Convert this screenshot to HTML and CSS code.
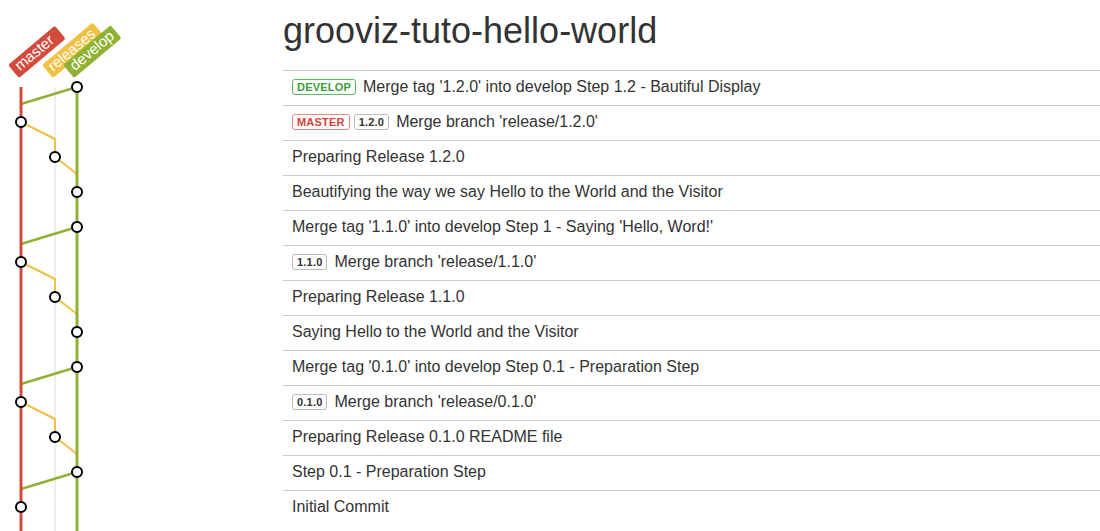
FILE: index.html
```html
<!DOCTYPE html>
<html>
<head>
<meta charset="utf-8">
<link rel="stylesheet" href="styles.css">
</head>
<body>
<div class="page">
  <div class="graph">
    <svg width="283" height="531" viewBox="0 0 283 531" xmlns="http://www.w3.org/2000/svg">
      <g class="labels" font-family="Liberation Sans, Arial, sans-serif" font-size="15" fill="#fff">
        <g transform="translate(19 78) rotate(-40)">
          <rect x="0" y="-17" width="61" height="17" rx="2" fill="#d24b3c"/>
          <text x="5" y="-4.5">master</text>
        </g>
        <g transform="translate(53 78) rotate(-40)">
          <rect x="0" y="-17" width="66" height="17" rx="2" fill="#f1c143"/>
          <text x="4" y="-4.5">releases</text>
        </g>
        <g transform="translate(74 78) rotate(-40)">
          <rect x="0" y="-17" width="62" height="17" rx="2" fill="#8fb234"/>
          <text x="5" y="-4.5">develop</text>
        </g>
      </g>
      <line x1="55" y1="87" x2="55" y2="531" stroke="#dddddd" stroke-width="1"/>
      <g fill="none" stroke-linejoin="round">
        <polyline points="77,87 21,104" stroke="#8fb234" stroke-width="2.5"/>
        <polyline points="77,227 21,244" stroke="#8fb234" stroke-width="2.5"/>
        <polyline points="77,367 21,384" stroke="#8fb234" stroke-width="2.5"/>
        <polyline points="77,472 21,489" stroke="#8fb234" stroke-width="2.5"/>
        <polyline points="21,122 55,139 55,157 77,174" stroke="#f1c143" stroke-width="2"/>
        <polyline points="21,262 55,279 55,297 77,314" stroke="#f1c143" stroke-width="2"/>
        <polyline points="21,402 55,419 55,437 77,454" stroke="#f1c143" stroke-width="2"/>
      </g>
      <line x1="21" y1="87" x2="21" y2="531" stroke="#d24b3c" stroke-width="3"/>
      <line x1="77" y1="87" x2="77" y2="531" stroke="#8fb234" stroke-width="3"/>
      <g fill="#fff" stroke="#000" stroke-width="2">
        <circle cx="77" cy="87" r="5"/>
        <circle cx="21" cy="122" r="5"/>
        <circle cx="55" cy="157" r="5"/>
        <circle cx="77" cy="192" r="5"/>
        <circle cx="77" cy="227" r="5"/>
        <circle cx="21" cy="262" r="5"/>
        <circle cx="55" cy="297" r="5"/>
        <circle cx="77" cy="332" r="5"/>
        <circle cx="77" cy="367" r="5"/>
        <circle cx="21" cy="402" r="5"/>
        <circle cx="55" cy="437" r="5"/>
        <circle cx="77" cy="472" r="5"/>
        <circle cx="21" cy="507" r="5"/>
      </g>
    </svg>
  </div>
  <div class="main">
    <h1 class="title">grooviz-tuto-hello-world</h1>
    <ul class="commits">
      <li class="commit"><span class="tag tag-develop">DEVELOP</span>Merge tag '1.2.0' into develop Step 1.2 - Bautiful Display</li>
      <li class="commit"><span class="tag tag-master">MASTER</span><span class="tag tag-version">1.2.0</span>Merge branch 'release/1.2.0'</li>
      <li class="commit">Preparing Release 1.2.0</li>
      <li class="commit">Beautifying the way we say Hello to the World and the Visitor</li>
      <li class="commit">Merge tag '1.1.0' into develop Step 1 - Saying 'Hello, Word!'</li>
      <li class="commit"><span class="tag tag-version">1.1.0</span>Merge branch 'release/1.1.0'</li>
      <li class="commit">Preparing Release 1.1.0</li>
      <li class="commit">Saying Hello to the World and the Visitor</li>
      <li class="commit">Merge tag '0.1.0' into develop Step 0.1 - Preparation Step</li>
      <li class="commit"><span class="tag tag-version">0.1.0</span>Merge branch 'release/0.1.0'</li>
      <li class="commit">Preparing Release 0.1.0 README file</li>
      <li class="commit">Step 0.1 - Preparation Step</li>
      <li class="commit">Initial Commit</li>
    </ul>
  </div>
</div>
</body>
</html>
```
FILE: styles.css
```css
html, body {
  margin: 0;
  padding: 0;
  background: #fff;
}
body {
  font-family: "Liberation Sans", Arial, Helvetica, sans-serif;
  color: #333;
  overflow: hidden;
}
.page {
  display: flex;
  align-items: flex-start;
}
.graph {
  width: 283px;
  flex: none;
}
.graph svg {
  display: block;
}
.main {
  flex: 1;
  min-width: 0;
}
.title {
  margin: 11px 0 19px 0;
  font-size: 36px;
  line-height: 40px;
  font-weight: normal;
  color: #333;
}
.commits {
  list-style: none;
  margin: 0;
  padding: 0;
}
.commit {
  display: flex;
  align-items: center;
  height: 32px;
  border-top: 1px solid #cccccc;
  padding: 0 9px 2px;
  font-size: 16px;
  white-space: nowrap;
}
.tag {
  display: inline-block;
  font-size: 11px;
  font-weight: bold;
  line-height: 14px;
  padding: 0 4px;
  border: 1px solid #bbb;
  border-radius: 3px;
  margin-right: 4px;
  letter-spacing: 0.2px;
}
.tag:last-of-type {
  margin-right: 7px;
}
.tag-develop {
  color: #3a9b3a;
  border-color: #5cb85c;
  padding: 0 4px;
}
.tag-master {
  color: #d0453e;
  border-color: #e08a85;
  padding: 0 4px;
}
.tag-version {
  color: #333;
  border-color: #bbb;
}
```
